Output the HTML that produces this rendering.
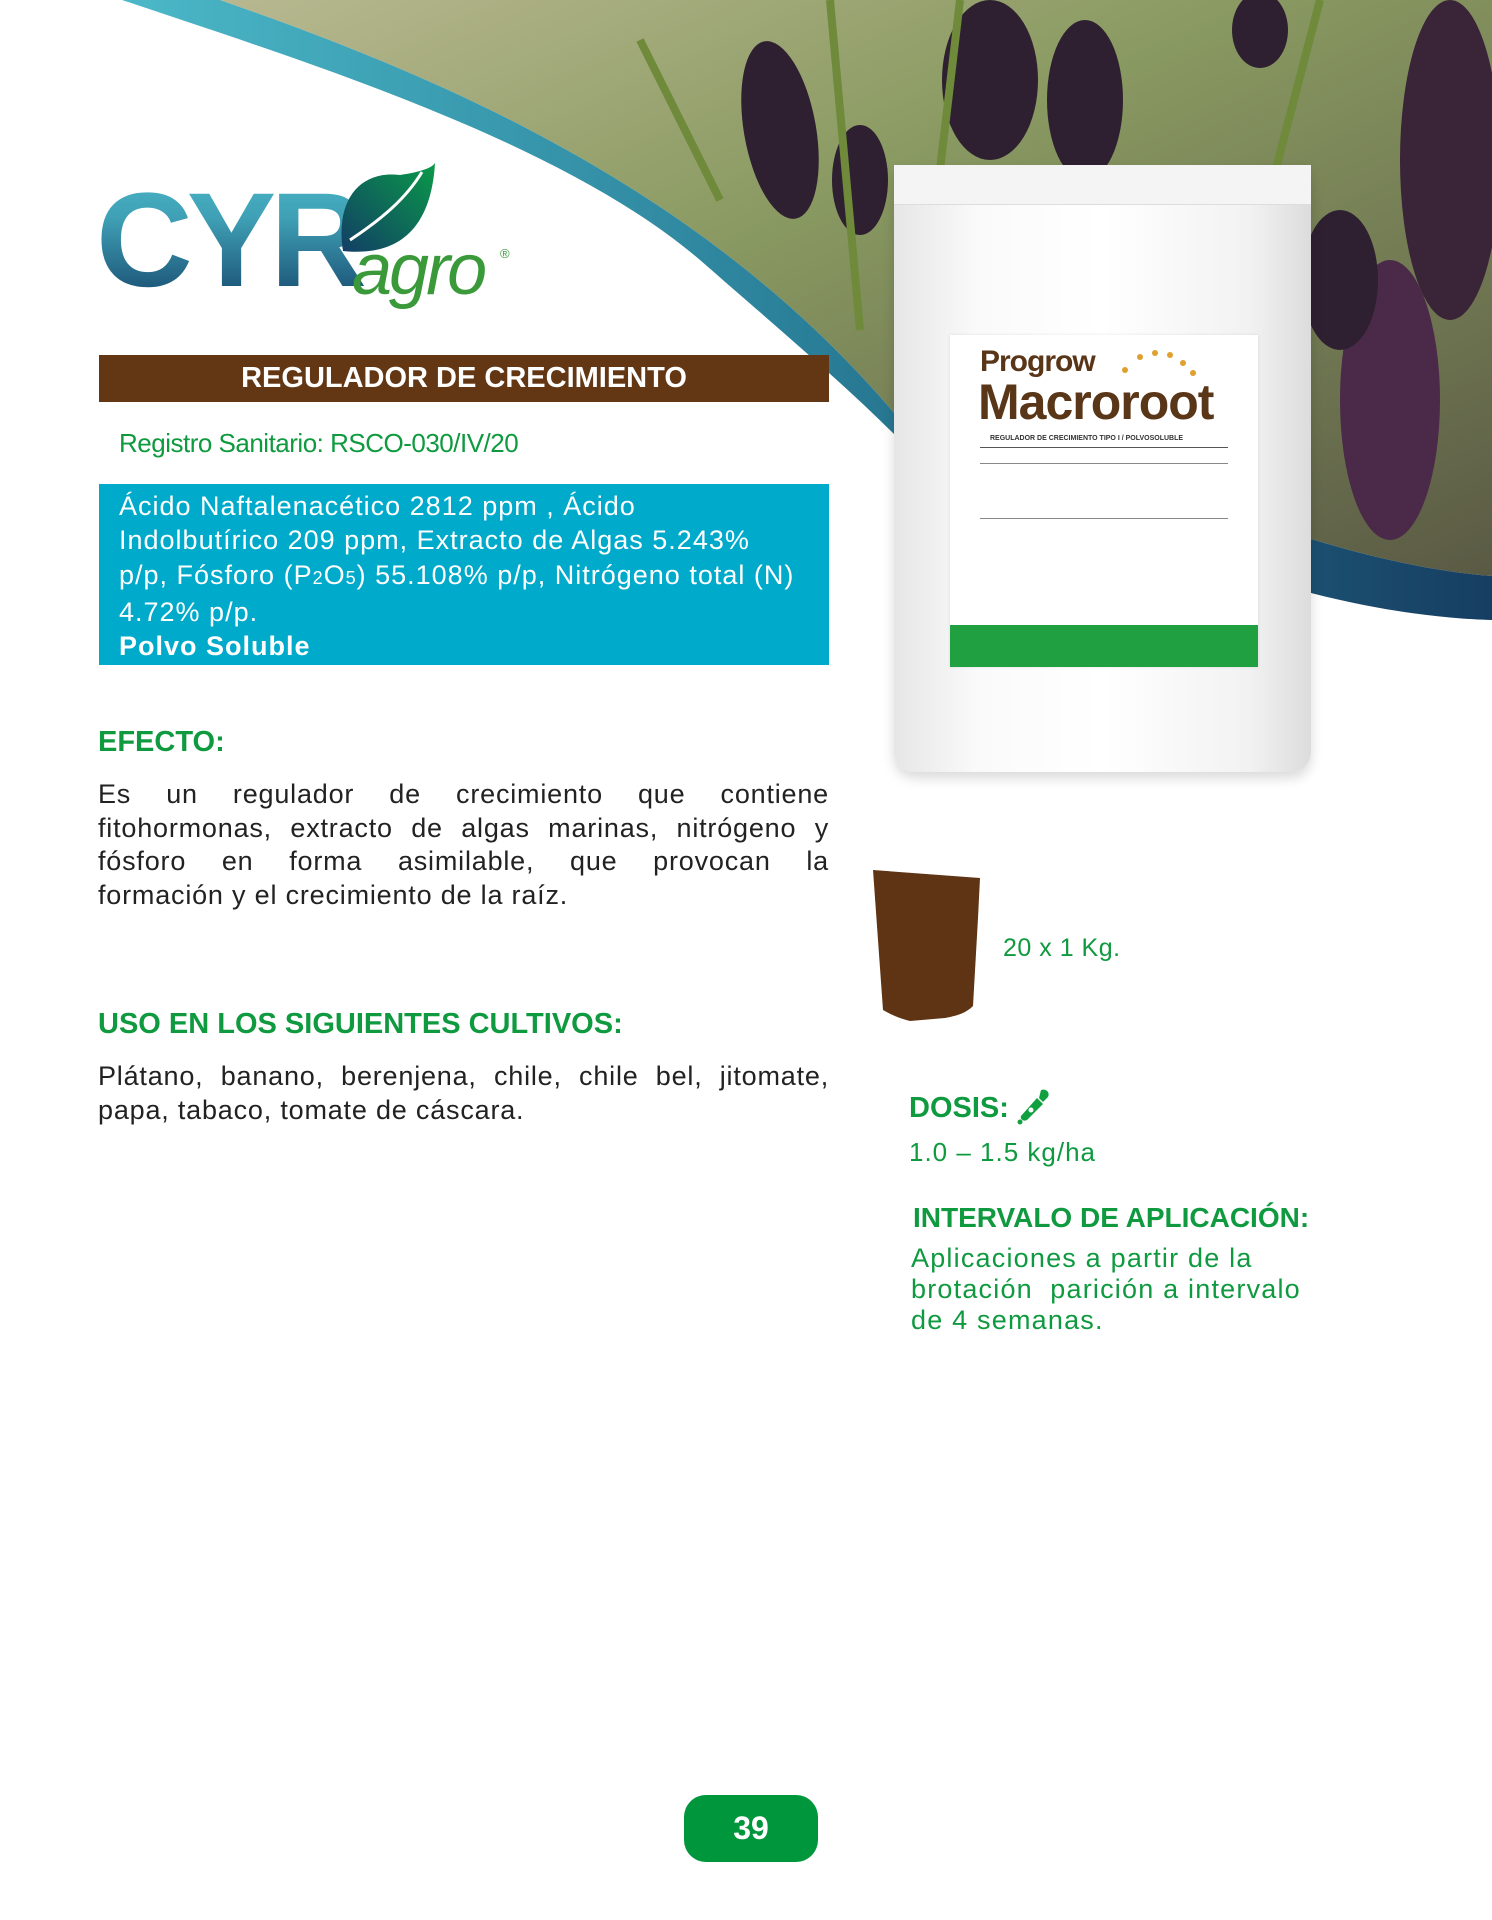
<!DOCTYPE html>
<html><head><meta charset="utf-8"><style>
*{margin:0;padding:0;box-sizing:border-box}
body{width:1492px;height:1920px;background:#fff;position:relative;overflow:hidden;font-family:"Liberation Sans",sans-serif}
.abs{position:absolute}
.g{color:#0f9a40}
.j span{display:block;text-align:justify;text-align-last:justify;white-space:nowrap}
.j span.l{text-align-last:left}
</style></head><body>
<svg class="abs" style="left:0;top:0" width="1492" height="800" viewBox="0 0 1492 800">
<defs>
<linearGradient id="ph" x1="0" y1="0" x2="1" y2="1">
<stop offset="0" stop-color="#b8b890"/><stop offset=".4" stop-color="#8a9a62"/><stop offset="1" stop-color="#5a5a44"/></linearGradient>
<linearGradient id="band" x1="0" y1="0" x2="1" y2="0">
<stop offset="0" stop-color="#4bb8c8"/><stop offset=".5" stop-color="#2a7f98"/><stop offset="1" stop-color="#163e62"/></linearGradient>
<linearGradient id="cyr" x1="0" y1="0" x2="0" y2="1">
<stop offset="0" stop-color="#4cb8c8"/><stop offset=".35" stop-color="#3fa0b5"/><stop offset="1" stop-color="#123e66"/></linearGradient>
<linearGradient id="leaf" x1="0" y1="1" x2="1" y2="0">
<stop offset="0" stop-color="#123e66"/><stop offset="1" stop-color="#0a9a48"/></linearGradient>
</defs>
<path d="M220 0 C420 70 700 180 900 420 L1311 539 C1380 560 1440 572 1492 576 L1492 0 Z" fill="url(#ph)"/>
<g fill="#2e2030">
<ellipse cx="780" cy="130" rx="36" ry="90" transform="rotate(-10 780 130)"/>
<ellipse cx="860" cy="180" rx="28" ry="55"/>
<ellipse cx="990" cy="80" rx="48" ry="80"/>
<ellipse cx="1085" cy="100" rx="38" ry="80"/>
<ellipse cx="1260" cy="30" rx="28" ry="38"/>
<ellipse cx="1450" cy="160" rx="50" ry="160" fill="#3a2438"/>
<ellipse cx="1390" cy="400" rx="50" ry="140" fill="#4a2a48"/>
<ellipse cx="1340" cy="280" rx="38" ry="70"/>
</g>
<g stroke="#6e8a3a" stroke-width="8" fill="none">
<path d="M830 0 L860 330"/><path d="M960 0 L940 170"/><path d="M1320 0 L1260 230"/><path d="M640 40 L720 200"/>
</g>
<path d="M122 0 C300 60 560 140 700 260 C780 330 840 380 900 440 L1300 590 C1380 612 1450 619 1492 620 L1492 576 C1440 572 1380 560 1311 539 L900 420 C700 180 420 70 220 0 Z" fill="url(#band)"/>
<text x="96" y="286" font-family="Liberation Sans" font-weight="bold" font-size="134" letter-spacing="-6" fill="url(#cyr)">CYR</text>
<path d="M343 251 C335 200 360 170 400 175 C420 172 432 168 435 163 C432 215 410 258 343 251 Z" fill="url(#leaf)"/>
<path d="M350 240 C380 220 405 200 422 172" stroke="#fff" stroke-width="3" fill="none"/>
<text x="352" y="294" font-family="Liberation Sans" font-style="italic" font-size="72" fill="#3a9a3a" letter-spacing="-3">agro</text>
<text x="500" y="258" font-size="13" fill="#3a9a3a">®</text>
</svg>

<div class="abs" style="left:894px;top:165px;width:417px;height:607px;background:linear-gradient(90deg,#e6e6e6,#fafafa 20%,#fff 50%,#f2f2f2 85%,#dcdcdc);border-radius:6px 6px 20px 20px;box-shadow:0 6px 12px rgba(0,0,0,.15)"></div>
<div class="abs" style="left:894px;top:165px;width:417px;height:40px;background:#f4f4f4;border-bottom:1px solid #ddd"></div>
<div class="abs" style="left:950px;top:335px;width:308px;height:332px;background:#fff;box-shadow:0 0 3px rgba(0,0,0,.1)">
<div class="abs" style="left:30px;top:10px;font-weight:bold;font-size:30px;color:#5a3618;letter-spacing:-1px">Progrow</div>
<div class="abs" style="left:28px;top:38px;font-weight:bold;font-size:50px;color:#5a3618;letter-spacing:-1px">Macroroot</div>
<div class="abs" style="left:40px;top:100px;font-size:7px;font-weight:bold;color:#333">REGULADOR DE CRECIMIENTO TIPO I / POLVOSOLUBLE</div>
<div class="abs" style="left:30px;top:112px;width:248px;border-top:1px solid #555"></div>
<div class="abs" style="left:30px;top:128px;width:248px;border-top:1px solid #888"></div>
<div class="abs" style="left:30px;top:183px;width:248px;border-top:1px solid #888"></div>
<div class="abs" style="left:0;top:290px;width:308px;height:42px;background:#20a040"></div>
</div>
<svg class="abs" style="left:1115px;top:345px" width="90" height="40"><g fill="#e0a030"><circle cx="10" cy="25" r="3"/><circle cx="25" cy="12" r="3"/><circle cx="40" cy="8" r="3"/><circle cx="55" cy="10" r="3"/><circle cx="68" cy="18" r="3"/><circle cx="78" cy="28" r="3"/></g></svg>

<div class="abs" style="left:99px;top:355px;width:730px;height:47px;background:#643714;color:#fff;font-weight:bold;font-size:29px;text-align:center;line-height:47px">REGULADOR DE CRECIMIENTO</div>
<div class="abs g" style="left:119px;top:428px;font-size:26px;letter-spacing:-0.5px">Registro Sanitario: RSCO-030/IV/20</div>
<div class="abs" style="left:99px;top:484px;width:730px;height:181px;background:#00aacb;color:#fff;font-size:27px;line-height:34.3px;padding:5px 0 0 20px;letter-spacing:1px;white-space:nowrap">Ácido Naftalenacético 2812 ppm , Ácido<br>Indolbutírico 209 ppm, Extracto de Algas 5.243%<br>p/p, Fósforo (P<span style="font-size:18px">2</span>O<span style="font-size:18px">5</span>) 55.108% p/p, Nitrógeno total (N)<br>4.72% p/p.<br><b>Polvo Soluble</b></div>

<div class="abs g" style="left:98px;top:726px;font-weight:bold;font-size:29px">EFECTO:</div>
<div class="abs j" style="left:98px;top:778px;width:731px;font-size:27px;line-height:33.5px;color:#222;letter-spacing:0.8px"><span>Es un regulador de crecimiento que contiene</span><span>fitohormonas, extracto de algas marinas, nitrógeno y</span><span>fósforo en forma asimilable, que provocan la</span><span class="l">formación y el crecimiento de la raíz.</span></div>

<div class="abs g" style="left:98px;top:1008px;font-weight:bold;font-size:29px">USO EN LOS SIGUIENTES CULTIVOS:</div>
<div class="abs j" style="left:98px;top:1060px;width:731px;font-size:27px;line-height:33.5px;color:#222;letter-spacing:0.8px"><span>Plátano, banano, berenjena, chile, chile bel, jitomate,</span><span class="l">papa, tabaco, tomate de cáscara.</span></div>

<svg class="abs" style="left:870px;top:866px" width="116" height="160"><path d="M3 4 L110 12 L108 52 L103 140 C95 148 85 150 75 152 L40 155 C28 152 20 148 13 144 Z" fill="#5e3414"/></svg>
<div class="abs g" style="left:1003px;top:934px;font-size:25px;letter-spacing:0.5px">20 x 1 Kg.</div>

<div class="abs g" style="left:909px;top:1092px;font-weight:bold;font-size:29px">DOSIS:</div>
<svg class="abs" style="left:1015px;top:1088px" width="36" height="38"><g fill="#10a040"><path d="M26 2 C32 0 36 6 32 10 L28 14 L24 10 Z"/><path d="M22 10 L28 16 L12 32 C8 34 5 31 6 28 Z"/><circle cx="5" cy="34" r="2.5"/></g><circle cx="16" cy="22" r="2.5" fill="#fff"/></svg>
<div class="abs g" style="left:909px;top:1137px;font-size:26px;letter-spacing:1px">1.0 – 1.5 kg/ha</div>
<div class="abs g" style="left:913px;top:1202px;font-weight:bold;font-size:28px">INTERVALO DE APLICACIÓN:</div>
<div class="abs g" style="left:911px;top:1243px;font-size:27px;line-height:31px;letter-spacing:1.2px;white-space:nowrap">Aplicaciones a partir de la<br>brotación&nbsp; parición a intervalo<br>de 4 semanas.</div>

<div class="abs" style="left:684px;top:1795px;width:134px;height:67px;background:#00963c;border-radius:22px;color:#fff;font-weight:bold;font-size:32px;text-align:center;line-height:67px">39</div>
</body></html>
